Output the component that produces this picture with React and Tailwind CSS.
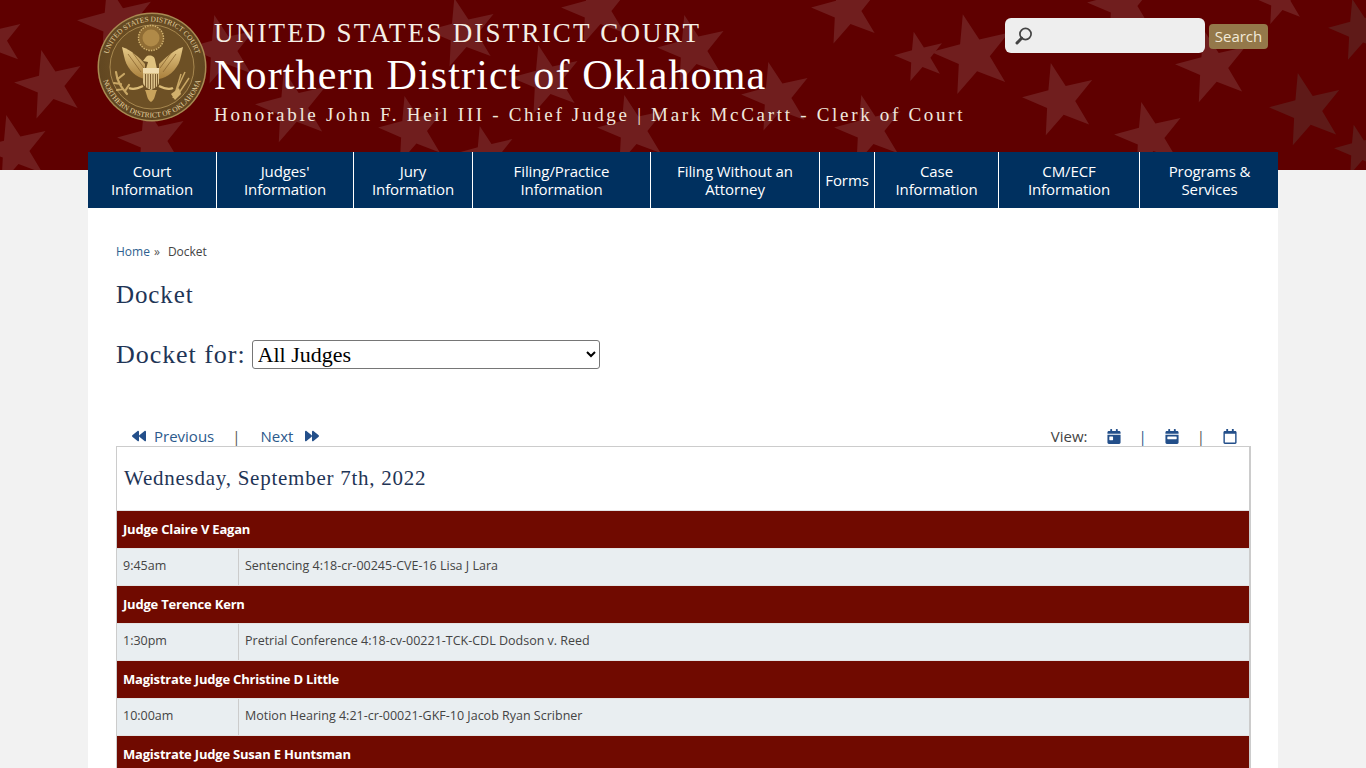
import React from "react";
import { FaBackward, FaForward, FaCalendarDay, FaCalendarWeek, FaRegCalendar } from "react-icons/fa";

const stars = [
  [117,23,40],[223,50,36],[293,107,38],[153,140,36],[50,85,36],[15,150,36],[-5,40,30],
  [413,130,35],[463,33,36],[487,155,30],[547,80,36],[597,10,36],[633,130,36],[693,50,36],[777,97,36],[847,10,36],[870,130,36],[920,57,26],
  [973,55,42],[1060,100,38],[1123,5,36],[1150,137,36],[1213,67,38],[1280,0,26],[1307,110,38],[1360,30,32],[1360,150,26],
];

function starPoints(cx, cy, r) {
  const pts = [];
  for (let i = 0; i < 10; i++) {
    const rad = i % 2 === 0 ? r : r * 0.4;
    const a = ((-90 - 14 + i * 36) * Math.PI) / 180;
    pts.push(`${(cx + rad * Math.cos(a)).toFixed(1)},${(cy + rad * Math.sin(a)).toFixed(1)}`);
  }
  return pts.join(" ");
}

function StarField() {
  return (
    <svg className="absolute inset-0 w-full h-full" viewBox="0 0 1366 170" preserveAspectRatio="none" aria-hidden="true">
      {stars.map(([x, y, r], i) => (
        <polygon key={i} points={starPoints(x, y, r)} fill={x > 1280 ? "#5f1a18" : "#701e1e"} />
      ))}
    </svg>
  );
}

function Seal() {
  return (
    <svg width="110" height="110" viewBox="0 0 110 110" className="shrink-0" aria-label="Seal">
      <defs>
        <radialGradient id="sealBg" cx="50%" cy="45%" r="55%">
          <stop offset="0%" stopColor="#7a5a2a" />
          <stop offset="100%" stopColor="#5f4520" />
        </radialGradient>
        <linearGradient id="gold" x1="0" y1="0" x2="0" y2="1">
          <stop offset="0%" stopColor="#e6c987" />
          <stop offset="100%" stopColor="#a97f3c" />
        </linearGradient>
        <path id="topArc" d="M 9.5 55 A 45.5 45.5 0 0 1 100.5 55" />
        <path id="botArc" d="M 4.5 55 A 50.5 50.5 0 0 0 105.5 55" />
      </defs>
      <circle cx="55" cy="55" r="54.5" fill="#a98a52" />
      <circle cx="55" cy="55" r="53" fill="url(#sealBg)" />
      <circle cx="55" cy="55" r="42" fill="#6d5025" stroke="#b8975a" strokeWidth="0.8" />
      <text fontFamily="Liberation Serif, serif" fontSize="7.4" fill="#e2cf9f">
        <textPath href="#topArc" startOffset="50%" textAnchor="middle">UNITED STATES DISTRICT COURT</textPath>
      </text>
      <text fontFamily="Liberation Serif, serif" fontSize="7.4" fill="#e2cf9f">
        <textPath href="#botArc" startOffset="50%" textAnchor="middle">NORTHERN DISTRICT OF OKLAHOMA</textPath>
      </text>
      <circle cx="54" cy="26" r="12.5" fill="#8f6c34" stroke="#d5b673" strokeWidth="1.4" strokeDasharray="1.4 1.2" />
      <circle cx="54" cy="26" r="8.5" fill="#b08a48" />
      <path d="M25 35 C34 38 43 46 48 52 L48 67 C40 66 31 58 28 48 C27 44 26 40 25 35Z" fill="url(#gold)" />
      <path d="M86 35 C77 38 68 46 62 52 L62 67 C70 66 80 58 83 48 C84 44 85 40 86 35Z" fill="url(#gold)" />
      <path d="M31 42 L44 60 M36 41 L47 56 M79 42 L66 60 M74 41 L63 56" stroke="#8a6630" strokeWidth="0.8" />
      <path d="M49 45 C52 42 58 44 58 48 L60 57 L49 57 L51 50 L46 49Z" fill="#e0c27e" />
      <path d="M46 56 H62 V70 C62 74 58 76 54 78 C50 76 46 74 46 70Z" fill="#dcc28a" />
      <path d="M46 56 H62 V61 H46Z" fill="#f0dcae" />
      <path d="M48.5 62V75 M51 62V76 M53.5 62V77 M56 62V77 M58.5 62V76 M60.5 62V74" stroke="#6f5024" strokeWidth="0.9" />
      <path d="M48 78 C50 82 50 88 54 90 C58 88 58 82 60 78Z" fill="#c9a35c" />
      <path d="M46 74 C40 77 36 78 32 76 M62 74 C68 77 72 78 76 76" stroke="#dcbc78" strokeWidth="2.4" fill="none" />
      <path d="M30 82 C25 76 20 70 19 60 M24 72 L17 71 M22 66 L27 62 M26 77 L20 78 M28 79 L32 73" stroke="#c9a765" strokeWidth="2.2" fill="none" strokeLinecap="round" />
      <path d="M76 86 L88 60 M78 82 L84 62 M80 84 L92 66" stroke="#c9a765" strokeWidth="1.5" fill="none" />
      <path d="M74 82 L82 76 L84 82 L78 88Z" fill="#d2b06c" />
    </svg>
  );
}

function Magnifier() {
  return (
    <svg width="20" height="20" viewBox="0 0 20 20" aria-hidden="true">
      <circle cx="11.5" cy="8" r="5.6" fill="none" stroke="#444" strokeWidth="1.7" />
      <path d="M7.6 12.2 L3 17" stroke="#444" strokeWidth="3" strokeLinecap="round" />
    </svg>
  );
}

const navItems = [
  { w: "w-[129px]", a: "Court", b: "Information" },
  { w: "w-[137px]", a: "Judges'", b: "Information" },
  { w: "w-[119px]", a: "Jury", b: "Information" },
  { w: "w-[178px]", a: "Filing/Practice", b: "Information" },
  { w: "w-[169px]", a: "Filing Without an", b: "Attorney" },
  { w: "w-[55px]", a: "Forms" },
  { w: "w-[124px]", a: "Case", b: "Information" },
  { w: "w-[141px]", a: "CM/ECF", b: "Information" },
  { w: "w-[139px]", a: "Programs &", b: "Services" },
];

const docket = [
  ["Judge Claire V Eagan", "9:45am", "Sentencing 4:18-cr-00245-CVE-16 Lisa J Lara"],
  ["Judge Terence Kern", "1:30pm", "Pretrial Conference 4:18-cv-00221-TCK-CDL Dodson v. Reed"],
  ["Magistrate Judge Christine D Little", "10:00am", "Motion Hearing 4:21-cr-00021-GKF-10 Jacob Ryan Scribner"],
];

function JudgeRow({ name }) {
  return (
    <div className="h-[37.5px] bg-[#700a00] border-b border-[#e3e3e3] flex items-center pl-[6px] text-[13px] font-bold text-white tracking-[-0.2px]">
      {name}
    </div>
  );
}

export default function App() {
  const serif = "font-['Liberation_Serif',serif]";
  return (
    <div className="relative h-[768px] overflow-hidden bg-[#f2f2f2] font-['Open_Sans',sans-serif]">
      <header className="relative h-[170px] bg-[#5f0000] overflow-hidden">
        <StarField />
        <div className="relative flex pl-[97px] pt-[12px]">
          <Seal />
          <div className={`ml-[7px] text-white ${serif}`}>
            <div className="mt-[5px] text-[27px] leading-[32px] tracking-[2.2px] text-[#f4efe6]">UNITED STATES DISTRICT COURT</div>
            <div className="mt-[1px] text-[42px] leading-[50px] tracking-[1.15px]">Northern District of Oklahoma</div>
            <div className="mt-[3px] text-[19px] leading-[24px] tracking-[2.7px] text-[#f0e8de] whitespace-nowrap">Honorable John F. Heil III - Chief Judge | Mark McCartt - Clerk of Court</div>
          </div>
          <div className="ml-auto mr-[98px] mt-[6px] flex items-center h-[35px]">
            <div className="w-[200px] h-[35px] bg-[#eeeeee] rounded-[6px] flex items-center pl-[9px]">
              <Magnifier />
            </div>
            <button className="ml-[4px] w-[59px] h-[25px] mt-[1px] bg-[#94784a] rounded-[4px] text-[#f2ead8] text-[15px] leading-[25px]">Search</button>
          </div>
        </div>
      </header>

      <div className="relative -mt-[18px] mx-[88px] w-[1190px] bg-white min-h-[800px]">
        <nav className="flex h-[56px] bg-[#00305f] text-white text-[15px] leading-[18px] tracking-[-0.1px]">
          {navItems.map((n, i) => (
            <a key={n.a} className={`${n.w} shrink-0 flex flex-col items-center justify-center text-center ${i < navItems.length - 1 ? "border-r border-white" : ""}`}>
              <span>{n.a}</span>
              {n.b && <span>{n.b}</span>}
            </a>
          ))}
        </nav>

        <main className="px-[28px]">
          <div className="pt-[35px] flex items-center text-[12px] leading-[18px] text-[#444]">
            <span className="text-[#2e5f8f]">Home</span>
            <span className="ml-[4px] text-[#555]">»</span>
            <span className="ml-[8px]">Docket</span>
          </div>
          <h1 className={`mt-[19px] text-[25px] leading-[30px] tracking-[0.9px] text-[#1f3556] ${serif}`}>Docket</h1>
          <div className="mt-[30px] flex items-center h-[29px]">
            <span className={`text-[26px] tracking-[0.95px] text-[#1f3556] ${serif}`}>Docket for:</span>
            <select className={`ml-[6px] w-[348px] h-[29px] bg-white border border-[#767676] rounded-[3px] pl-[1px] text-[22px] text-black ${serif}`} defaultValue="all">
              <option value="all">All Judges</option>
            </select>
          </div>

          <div className="mt-[56px] flex items-center justify-between h-[22px] pl-[15px] pr-[13px] text-[15px] text-[#2c5a8c]">
            <div className="flex items-center">
              <FaBackward className="w-[16px] h-[14px] text-[#234f8a]" />
              <span className="ml-[7px]">Previous</span>
              <span className="ml-[18px] text-[#555]">|</span>
              <span className="ml-[20px]">Next</span>
              <FaForward className="ml-[11px] w-[16px] h-[14px] text-[#234f8a]" />
            </div>
            <div className="flex items-center">
              <span className="text-[#444]">View:</span>
              <FaCalendarDay className="ml-[19px] w-[14px] h-[15px] text-[#234f8a]" />
              <span className="ml-[18px] text-[#2c5a8c]">|</span>
              <FaCalendarWeek className="ml-[18px] w-[14px] h-[15px] text-[#234f8a]" />
              <span className="ml-[18px] text-[#555]">|</span>
              <FaRegCalendar className="ml-[18px] w-[14px] h-[15px] text-[#234f8a]" />
            </div>
          </div>

          <section className="mt-[-1px] border-t border-l border-r-2 border-[#cccccc] w-[1135px]">
            <div className={`h-[64px] flex items-center pl-[7px] border-b border-[#e3e3e3] text-[21px] tracking-[0.75px] text-[#1f3556] ${serif}`}>
              Wednesday, September 7th, 2022
            </div>
            {docket.map(([judge, time, desc]) => (
              <React.Fragment key={judge}>
                <JudgeRow name={judge} />
                <div className="h-[37.5px] bg-[#e9eef1] flex items-center text-[12.5px] text-[#444] border-b border-[#e3e3e3]">
                  <div className="w-[122px] h-full flex items-center pl-[6px] border-r border-[#cccccc]">{time}</div>
                  <div className="pl-[6px]">{desc}</div>
                </div>
              </React.Fragment>
            ))}
            <JudgeRow name="Magistrate Judge Susan E Huntsman" />
          </section>
        </main>
      </div>
    </div>
  );
}
